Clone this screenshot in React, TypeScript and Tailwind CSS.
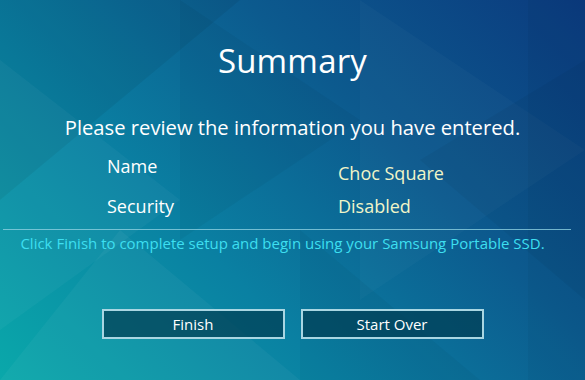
export default function App() {
  return (
    <div
      className="relative h-[380px] w-[585px] overflow-hidden bg-[linear-gradient(225deg,#0b3a7e_0%,#0c5a8e_35%,#0a80a2_65%,#0aa8aa_100%)] text-white"
      style={{ fontFamily: "'Open Sans', 'Liberation Sans', sans-serif" }}
    >
      {/* faint triangle pattern */}
      <svg className="absolute inset-0" width="585" height="380" viewBox="0 0 585 380">
        <polygon points="0,0 240,0 0,200" fill="#000000" opacity="0.06" />
        <polygon points="0,60 180,200 0,330" fill="#ffffff" opacity="0.035" />
        <polygon points="180,0 360,120 180,240" fill="#000000" opacity="0.04" />
        <polygon points="360,0 585,150 360,300" fill="#ffffff" opacity="0.025" />
        <polygon points="120,230 300,380 0,380" fill="#ffffff" opacity="0.04" />
        <polygon points="300,230 480,380 300,380" fill="#000000" opacity="0.035" />
        <polygon points="420,160 585,60 585,300" fill="#000000" opacity="0.04" />
        <rect x="528" y="0" width="57" height="380" fill="#000000" opacity="0.03" />
      </svg>

      <div className="relative flex flex-col items-center">
        <h1 className="mt-[39px] text-[33px] leading-[44px] tracking-[0.2px]">Summary</h1>
        <p className="mt-[31px] text-[20.2px] leading-[26px]">
          Please review the information you have entered.
        </p>

        <div className="mt-[13px] grid w-full grid-cols-[231px_1fr] pl-[107px] text-[18px]">
          <div className="leading-[26px]">Name</div>
          <div className="mt-[7px] leading-[26px] text-[#f0f5c8]">Choc Square</div>
          <div className="mt-[7px] leading-[26px]">Security</div>
          <div className="mt-[7px] leading-[26px] text-[#f0f5c8]">Disabled</div>
        </div>

        <div className="mt-[10px] ml-[3px] mr-[14px] h-px self-stretch bg-[#8ccfe0]/80" />

        <p className="mt-[3px] pr-[20px] text-[15px] leading-[20px] text-[#3ddff0]">
          Click Finish to complete setup and begin using your Samsung Portable SSD.
        </p>

        <div className="mt-[56px] flex gap-[16px]">
          <button className="h-[30px] w-[183px] border-2 border-[#a9d6e2] bg-[#003c52]/70 text-[15px] text-white">
            Finish
          </button>
          <button className="h-[30px] w-[183px] border-2 border-[#a9d6e2] bg-[#003c52]/70 text-[15px] text-white">
            Start Over
          </button>
        </div>
      </div>
    </div>
  );
}
